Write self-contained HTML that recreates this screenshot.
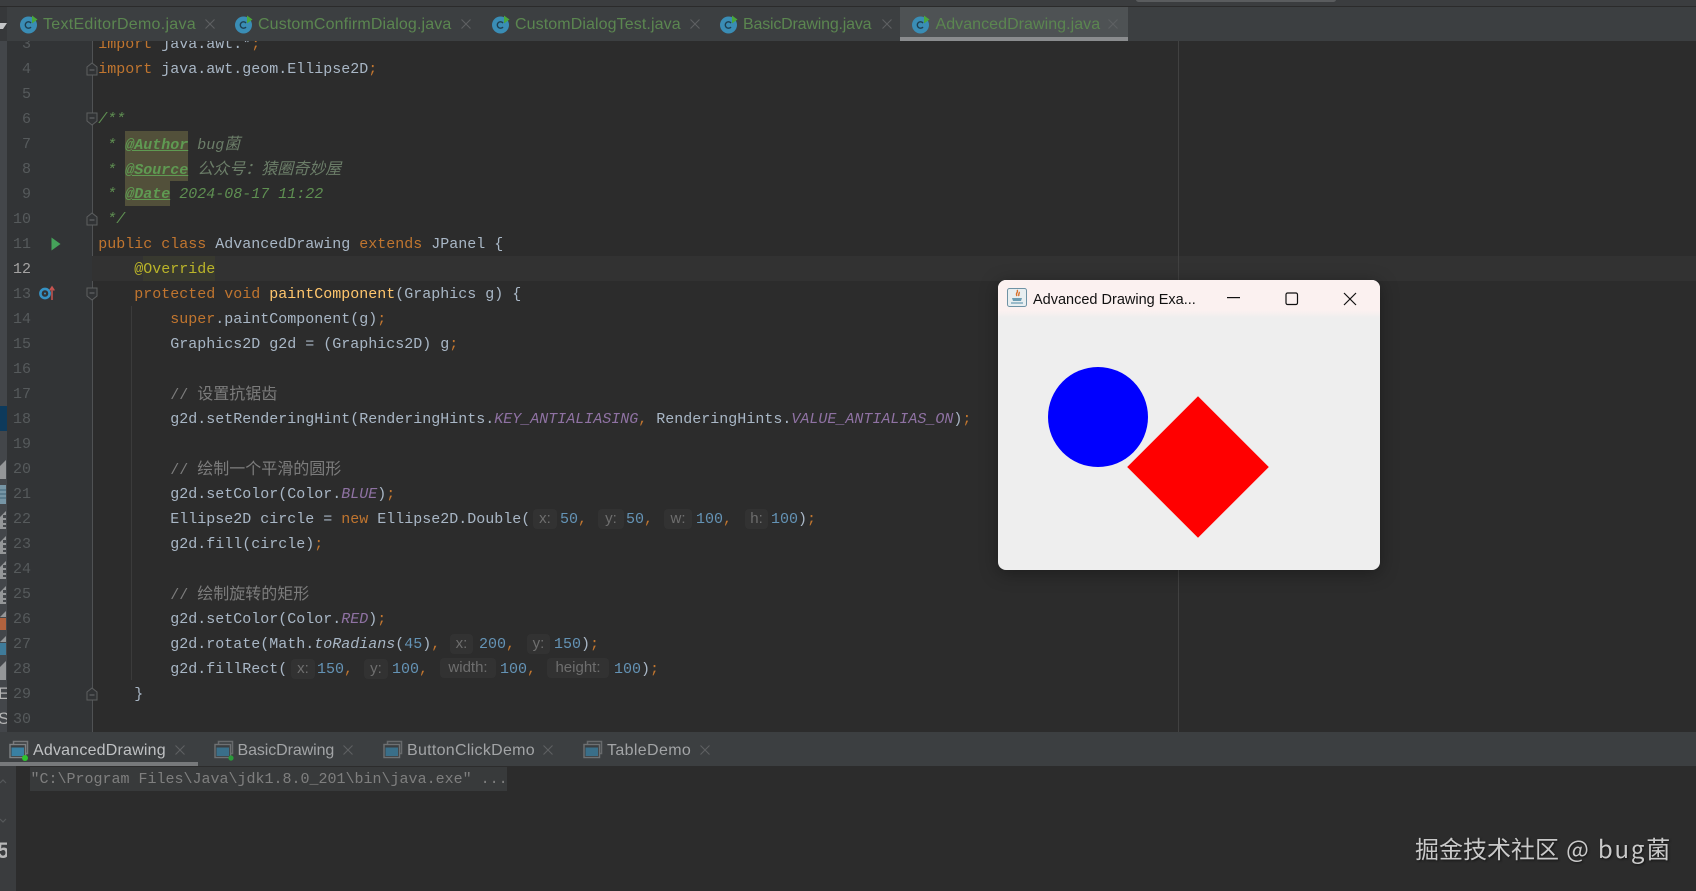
<!DOCTYPE html>
<html><head><meta charset="utf-8"><style>
html,body{margin:0;padding:0;width:1696px;height:891px;overflow:hidden;background:#2c2c2c}
#r{position:relative;width:1696px;height:891px;overflow:hidden;background:#2c2c2c}
.a{position:absolute}
.l{position:absolute;height:25px;line-height:25px;font:15px/25px "Liberation Mono","Noto Sans CJK SC",monospace;color:#a9b7c6;white-space:pre}
.o{color:#c0752f}.n{color:#6493b5}.f{color:#8f72a3;font-style:italic}.m{color:#ffc66d}.i{font-style:italic}
.d{color:#5f9052;font-style:italic}.t{color:#5f9a52;font-style:italic;font-weight:bold;text-decoration:underline}
.c{color:#7c7c7c}.z{font:16px/25px "Liberation Sans","Noto Sans CJK SC",sans-serif}
.zi{font:italic 16px/25px "Liberation Sans","Noto Sans CJK SC",sans-serif;color:#6b7d68}
.h{position:absolute;height:20px;line-height:19px;background:#323232;border-radius:4px;color:#6e6e6e;font:15px/19px "Liberation Sans",sans-serif;text-align:center}
.tb{position:absolute;top:13px;height:24px;line-height:24px;font:16px/24px "Liberation Sans",sans-serif;color:#5b8650;white-space:nowrap}
.x{position:absolute;top:19px;left:0;width:10px;height:10px}
.bt{position:absolute;top:738.5px;height:24px;font:16px/24px "Liberation Sans",sans-serif;color:#a2a4a6;white-space:nowrap}
.bx{position:absolute;top:745px;width:10px;height:10px}
.ti{position:absolute;top:13.5px;width:20px;height:20px}
.bi{position:absolute;top:740px;width:20px;height:20px}
.fm{position:absolute;left:86px;width:12px;height:14px}
.no{position:absolute;left:0;width:31px;top:32px;text-align:right;font:15px/25px "Liberation Mono",monospace;color:#565a5c;white-space:pre;margin:0}
</style></head><body><div id="r">
<svg width="0" height="0" style="position:absolute"><defs>
<symbol id="ci" viewBox="0 0 20 20"><circle cx="9.5" cy="11" r="8.5" fill="#3a8db5"/><path d="M12 9a3.2 3.2 0 1 0 0 4" fill="none" stroke="#1e3f50" stroke-width="1.4"/><path d="M13 1.5l5.5 4-5.5 4z" fill="#4aa63c"/></symbol>
<symbol id="te" viewBox="0 0 20 20"><rect x="4.5" y="1.5" width="14" height="12" fill="none" stroke="#77797b" stroke-width="1.5"/><rect x="1" y="4.5" width="15.5" height="13" fill="#3b3e40" stroke="#7f8284" stroke-width="1.4"/><rect x="2.5" y="7.5" width="12.5" height="8.5" fill="#3a80a2"/></symbol>
<symbol id="xx" viewBox="0 0 10 10"><path d="M.5.5l9 9M9.5.5l-9 9" stroke="#5e6062" stroke-width="1.1" fill="none"/></symbol>
<symbol id="fu" viewBox="0 0 12 14"><path d="M1 13V5l5-4 5 4v8z" fill="#313335" stroke="#5d5f60"/><path d="M3.5 8h5" stroke="#6a6c6e"/></symbol>
<symbol id="fd" viewBox="0 0 12 14"><path d="M1 1v8l5 4 5-4V1z" fill="#313335" stroke="#5d5f60"/><path d="M3.5 6h5" stroke="#6a6c6e"/></symbol>
</defs></svg>

<!-- gutter / strips -->
<div class="a" style="left:0;top:41px;width:7px;height:691px;background:#43464a"></div>
<div class="a" style="left:7px;top:41px;width:85px;height:691px;background:#323436"></div>
<div class="a" style="left:92px;top:41px;width:1px;height:691px;background:#505254"></div>
<div class="a" style="left:92px;top:256px;width:1604px;height:25px;background:#323232"></div>
<div class="a" style="left:143px;top:256px;width:72px;height:25px;background:#38392f"></div>
<div class="a" style="left:1178px;top:41px;width:1px;height:691px;background:#414141"></div>
<div class="a" style="left:131px;top:306px;width:1px;height:374px;background:#3b3b3b"></div>

<!-- left strip fragments -->
<div class="a" style="left:0;top:406px;width:7px;height:25px;background:#0d3a5c"></div>
<svg class="a" style="left:0;top:455px;opacity:.85" width="7" height="245" viewBox="0 0 7 245">
<path d="M0 11l6-6v19H0z" fill="#a3a5a6"/>
<rect y="30" width="6" height="19" fill="#7fa3b5"/><path d="M0 35h6M0 39h6M0 43h6" stroke="#3f6a80"/>
<path d="M0 62l6-6v4H3v3h3v2H3v3h3v2H3v2h3v2H0z" fill="#a3a5a6"/>
<path d="M0 87l6-6v4H3v3h3v2H3v3h3v2H3v2h3v2H0z" fill="#a3a5a6"/>
<path d="M0 112l6-6v4H3v3h3v2H3v3h3v2H3v2h3v2H0z" fill="#a3a5a6"/>
<path d="M0 137l6-6v4H3v3h3v2H3v3h3v2H3v2h3v2H0z" fill="#a3a5a6"/>
<path d="M0 162l6-6v6z" fill="#a3a5a6"/><rect y="163" width="6" height="12" fill="#c4673c"/>
<path d="M0 187l6-6v6z" fill="#a3a5a6"/><rect y="188" width="6" height="12" fill="#3f85a8"/>
<path d="M0 212l6-6v19H0z" fill="#a3a5a6"/>
</svg>
<div class="a" style="left:-2px;top:681px;width:9px;height:50px;overflow:hidden;font:17px/25px 'Liberation Sans',sans-serif;color:#b5b5b5">E<br>S</div>

<!-- line numbers -->
<pre class="no">3
4
5
6
7
8
9
10
11
<span style="color:#a4a3a3">12</span>
13
14
15
16
17
18
19
20
21
22
23
24
25
26
27
28
29
30</pre>

<!-- gutter icons -->
<svg class="a" style="left:51px;top:237px" width="10" height="14"><path d="M0.5 0.5L9.5 7L0.5 13.5z" fill="#45a35a"/></svg>
<svg class="a" style="left:39px;top:285px" width="16" height="16"><circle cx="6" cy="8.5" r="4.6" fill="none" stroke="#3592c4" stroke-width="2.6"/><circle cx="6" cy="8.5" r="1" fill="#3592c4"/><path d="M13 15V3M10.7 5.5L13 2l2.3 3.5" fill="none" stroke="#c75450" stroke-width="1.5"/></svg>

<!-- fold markers -->
<svg class="fm" style="top:62px"><use href="#fu"/></svg>
<svg class="fm" style="top:112px"><use href="#fd"/></svg>
<svg class="fm" style="top:212px"><use href="#fu"/></svg>
<svg class="fm" style="top:287px"><use href="#fd"/></svg>
<svg class="fm" style="top:687px"><use href="#fu"/></svg>

<!-- doc highlights -->
<div class="a" style="left:125px;top:131px;width:63px;height:50px;background:#52503a"></div>
<div class="a" style="left:125px;top:181px;width:45px;height:25px;background:#52503a"></div>

<!-- code -->
<div class="l" style="left:98.2px;top:32px"><span class="o">import</span> java.awt.*<span class="o">;</span></div>
<div class="l" style="left:98.2px;top:57px"><span class="o">import</span> java.awt.geom.Ellipse2D<span class="o">;</span></div>
<div class="l d" style="left:98.2px;top:107px">/**</div>
<div class="l d" style="left:98.2px;top:132px"> * <span class="t">@Author</span> <span style="color:#6b7d68">bug</span><span class="zi">菌</span></div>
<div class="l d" style="left:98.2px;top:157px"> * <span class="t">@Source</span> <span class="zi">公众号&#xFF1A;猿圈奇妙屋</span></div>
<div class="l d" style="left:98.2px;top:182px"> * <span class="t">@Date</span> 2024-08-17 11:22</div>
<div class="l d" style="left:98.2px;top:207px"> */</div>
<div class="l" style="left:98.2px;top:232px"><span class="o">public class</span> AdvancedDrawing <span class="o">extends</span> JPanel {</div>
<div class="l" style="left:134.2px;top:257px;color:#bbb529">@Override</div>
<div class="l" style="left:134.2px;top:282px"><span class="o">protected void</span> <span class="m">paintComponent</span>(Graphics g) {</div>
<div class="l" style="left:170.2px;top:307px"><span class="o">super</span>.paintComponent(g)<span class="o">;</span></div>
<div class="l" style="left:170.2px;top:332px">Graphics2D g2d = (Graphics2D) g<span class="o">;</span></div>
<div class="l c" style="left:170.2px;top:382px">// <span class="z">设置抗锯齿</span></div>
<div class="l" style="left:170.2px;top:407px">g2d.setRenderingHint(RenderingHints.<span class="f">KEY_ANTIALIASING</span><span class="o">,</span> RenderingHints.<span class="f">VALUE_ANTIALIAS_ON</span>)<span class="o">;</span></div>
<div class="l c" style="left:170.2px;top:457px">// <span class="z">绘制一个平滑的圆形</span></div>
<div class="l" style="left:170.2px;top:482px">g2d.setColor(Color.<span class="f">BLUE</span>)<span class="o">;</span></div>
<div class="l" style="left:170.2px;top:507px">Ellipse2D circle = <span class="o">new</span> Ellipse2D.Double(</div>
<div class="h" style="left:533px;top:509px;width:24px">x:</div><div class="l n" style="left:560px;top:507px">50<span class="o">,</span></div>
<div class="h" style="left:598px;top:509px;width:26px">y:</div><div class="l n" style="left:626px;top:507px">50<span class="o">,</span></div>
<div class="h" style="left:664px;top:509px;width:28px">w:</div><div class="l n" style="left:696px;top:507px">100<span class="o">,</span></div>
<div class="h" style="left:745px;top:509px;width:23px">h:</div><div class="l n" style="left:771px;top:507px">100<span style="color:#a9b7c6">)</span><span class="o">;</span></div>
<div class="l" style="left:170.2px;top:532px">g2d.fill(circle)<span class="o">;</span></div>
<div class="l c" style="left:170.2px;top:582px">// <span class="z">绘制旋转的矩形</span></div>
<div class="l" style="left:170.2px;top:607px">g2d.setColor(Color.<span class="f">RED</span>)<span class="o">;</span></div>
<div class="l" style="left:170.2px;top:632px">g2d.rotate(Math.<span class="i">toRadians</span>(<span class="n">45</span>)<span class="o">,</span></div>
<div class="h" style="left:450px;top:634px;width:23px">x:</div><div class="l n" style="left:479px;top:632px">200<span class="o">,</span></div>
<div class="h" style="left:527px;top:634px;width:23px">y:</div><div class="l n" style="left:554px;top:632px">150<span style="color:#a9b7c6">)</span><span class="o">;</span></div>
<div class="l" style="left:170.2px;top:657px">g2d.fillRect(</div>
<div class="h" style="left:291px;top:659px;width:24px">x:</div><div class="l n" style="left:317px;top:657px">150<span class="o">,</span></div>
<div class="h" style="left:364px;top:659px;width:24px">y:</div><div class="l n" style="left:392px;top:657px">100<span class="o">,</span></div>
<div class="h" style="left:440px;top:658px;width:56px">width:</div><div class="l n" style="left:500px;top:657px">100<span class="o">,</span></div>
<div class="h" style="left:547px;top:658px;width:62px">height:</div><div class="l n" style="left:614px;top:657px">100<span style="color:#a9b7c6">)</span><span class="o">;</span></div>
<div class="l" style="left:134.2px;top:682px">}</div>

<!-- top bar & tabs -->
<div class="a" style="left:0;top:0;width:1696px;height:6px;background:#3b3d3f"></div>
<div class="a" style="left:0;top:6px;width:1696px;height:1px;background:#2b2b2b"></div>
<div class="a" style="left:1136px;top:-3px;width:200px;height:5px;border-radius:3px;background:#5a5c5e"></div>
<div class="a" style="left:0;top:7px;width:1696px;height:34px;background:#3c3f41"></div>
<div class="a" style="left:0;top:7px;width:7px;height:34px;background:#36383a"></div>
<svg class="a" style="left:0;top:22px" width="7" height="8"><path d="M0 1h7L3 7H0z" fill="#c4c6c8"/></svg>
<div class="a" style="left:900px;top:7px;width:228px;height:34px;background:#4e5254"></div>
<div class="a" style="left:900px;top:37px;width:228px;height:4px;background:#8a8c8e"></div>

<svg class="ti" style="left:19px"><use href="#ci"/></svg><div class="tb" style="left:43px;letter-spacing:.28px">TextEditorDemo.java</div><svg class="x" style="left:205px"><use href="#xx"/></svg>
<svg class="ti" style="left:234px"><use href="#ci"/></svg><div class="tb" style="left:258px;letter-spacing:.13px">CustomConfirmDialog.java</div><svg class="x" style="left:461px"><use href="#xx"/></svg>
<svg class="ti" style="left:491px"><use href="#ci"/></svg><div class="tb" style="left:515px;letter-spacing:.1px">CustomDialogTest.java</div><svg class="x" style="left:690px"><use href="#xx"/></svg>
<svg class="ti" style="left:719px"><use href="#ci"/></svg><div class="tb" style="left:743px;letter-spacing:-.19px">BasicDrawing.java</div><svg class="x" style="left:882px"><use href="#xx"/></svg>
<svg class="ti" style="left:911px"><use href="#ci"/></svg><div class="tb" style="left:935.5px;letter-spacing:.05px">AdvancedDrawing.java</div><svg class="x" style="left:1108px"><use href="#xx"/></svg>

<!-- bottom panel -->
<div class="a" style="left:0;top:732px;width:1696px;height:34px;background:#3c3f41"></div>
<div class="a" style="left:0;top:762px;width:198px;height:4px;background:#77797b"></div>
<div class="a" style="left:0;top:766px;width:16px;height:125px;background:#3a3c3e"></div>
<div class="a" style="left:30px;top:767px;width:477px;height:24px;background:#383a3b"></div>
<div class="l" style="left:30.5px;top:767px;color:#7f7f7f">"C:\Program Files\Java\jdk1.8.0_201\bin\java.exe" ...</div>

<svg class="bi" style="left:9px"><use href="#te"/></svg><svg class="a" style="left:21px;top:754px" width="8" height="8"><circle cx="4" cy="4" r="3" fill="#2fc42f"/></svg>
<div class="bt" style="left:33px;color:#bfc1c3;letter-spacing:.2px">AdvancedDrawing</div><svg class="bx" style="left:175px"><use href="#xx"/></svg>
<svg class="bi" style="left:214px;opacity:.75"><use href="#te"/></svg><svg class="a" style="left:227px;top:754px" width="8" height="8"><circle cx="4" cy="4" r="2.6" fill="#2a9a3a"/></svg>
<div class="bt" style="left:237.5px;letter-spacing:-.09px">BasicDrawing</div><svg class="bx" style="left:343px"><use href="#xx"/></svg>
<svg class="bi" style="left:383px;opacity:.75"><use href="#te"/></svg>
<div class="bt" style="left:407px;letter-spacing:.29px">ButtonClickDemo</div><svg class="bx" style="left:543px"><use href="#xx"/></svg>
<svg class="bi" style="left:583px;opacity:.75"><use href="#te"/></svg>
<div class="bt" style="left:607px;letter-spacing:.36px">TableDemo</div><svg class="bx" style="left:700px"><use href="#xx"/></svg>

<svg class="a" style="left:0;top:775px" width="16" height="60"><path d="M0 8l3-3 3 3" fill="none" stroke="#55585a" stroke-width="1.2"/><path d="M0 44l3 3 3-3" fill="none" stroke="#55585a" stroke-width="1.2"/></svg>
<div class="a" style="left:-3px;top:836px;width:10px;height:30px;overflow:hidden;font:bold 22px/30px 'Liberation Sans',sans-serif;color:#b8b8b8">5</div>

<!-- swing window -->
<div class="a" style="left:998px;top:280px;width:382px;height:290px;border-radius:8px;background:#eeeeee;box-shadow:0 3px 18px rgba(0,0,0,.35);overflow:hidden">
<div class="a" style="left:0;top:0;width:382px;height:38px;background:linear-gradient(#fbf1f0 80%,#eeeeee)"></div>
<svg class="a" style="left:9px;top:8px" width="20" height="19" viewBox="0 0 20 19"><rect x=".5" y=".5" width="19" height="18" rx="2" fill="#e8eef0" stroke="#6f93a5"/><path d="M10 2c2 2-2 3 0 6M12 4c1 1-1 2 0 4" fill="none" stroke="#d9712b" stroke-width="1.4"/><path d="M5 10h10l-1 3H6z" fill="#6d9db3"/><path d="M4 15h12" stroke="#6d9db3" stroke-width="1.2"/></svg>
<div class="a" style="left:35px;top:7.5px;width:165px;height:24px;font:14.5px/24px 'Liberation Sans',sans-serif;color:#111;white-space:nowrap">Advanced Drawing Exa...</div>
<svg class="a" style="left:229px;top:17px" width="13" height="2"><rect width="13" height="1.2" fill="#111"/></svg>
<svg class="a" style="left:287px;top:12px" width="14" height="14"><rect x="1" y="1" width="11.5" height="11.5" rx="1.6" fill="none" stroke="#111" stroke-width="1.2"/></svg>
<svg class="a" style="left:345px;top:12px" width="14" height="14"><path d="M1 1l12 12M13 1L1 13" stroke="#111" stroke-width="1.2" fill="none"/></svg>
<svg class="a" style="left:0;top:0" width="382" height="290"><circle cx="100" cy="137" r="50" fill="#0000ff"/><path d="M200 116.2L270.8 187L200 257.8L129.2 187z" fill="#ff0000"/></svg>
</div>

<!-- watermark -->
<div class="a" style="left:1415px;top:830px;width:270px;height:36px;font:24px/36px 'Noto Sans CJK SC','Liberation Sans',sans-serif;color:#c9c9c9;white-space:nowrap;text-shadow:1px 1px 2px rgba(0,0,0,.6)">掘金技术社区<span style="letter-spacing:1.8px"> @ bug</span>菌</div>
</div></body></html>
